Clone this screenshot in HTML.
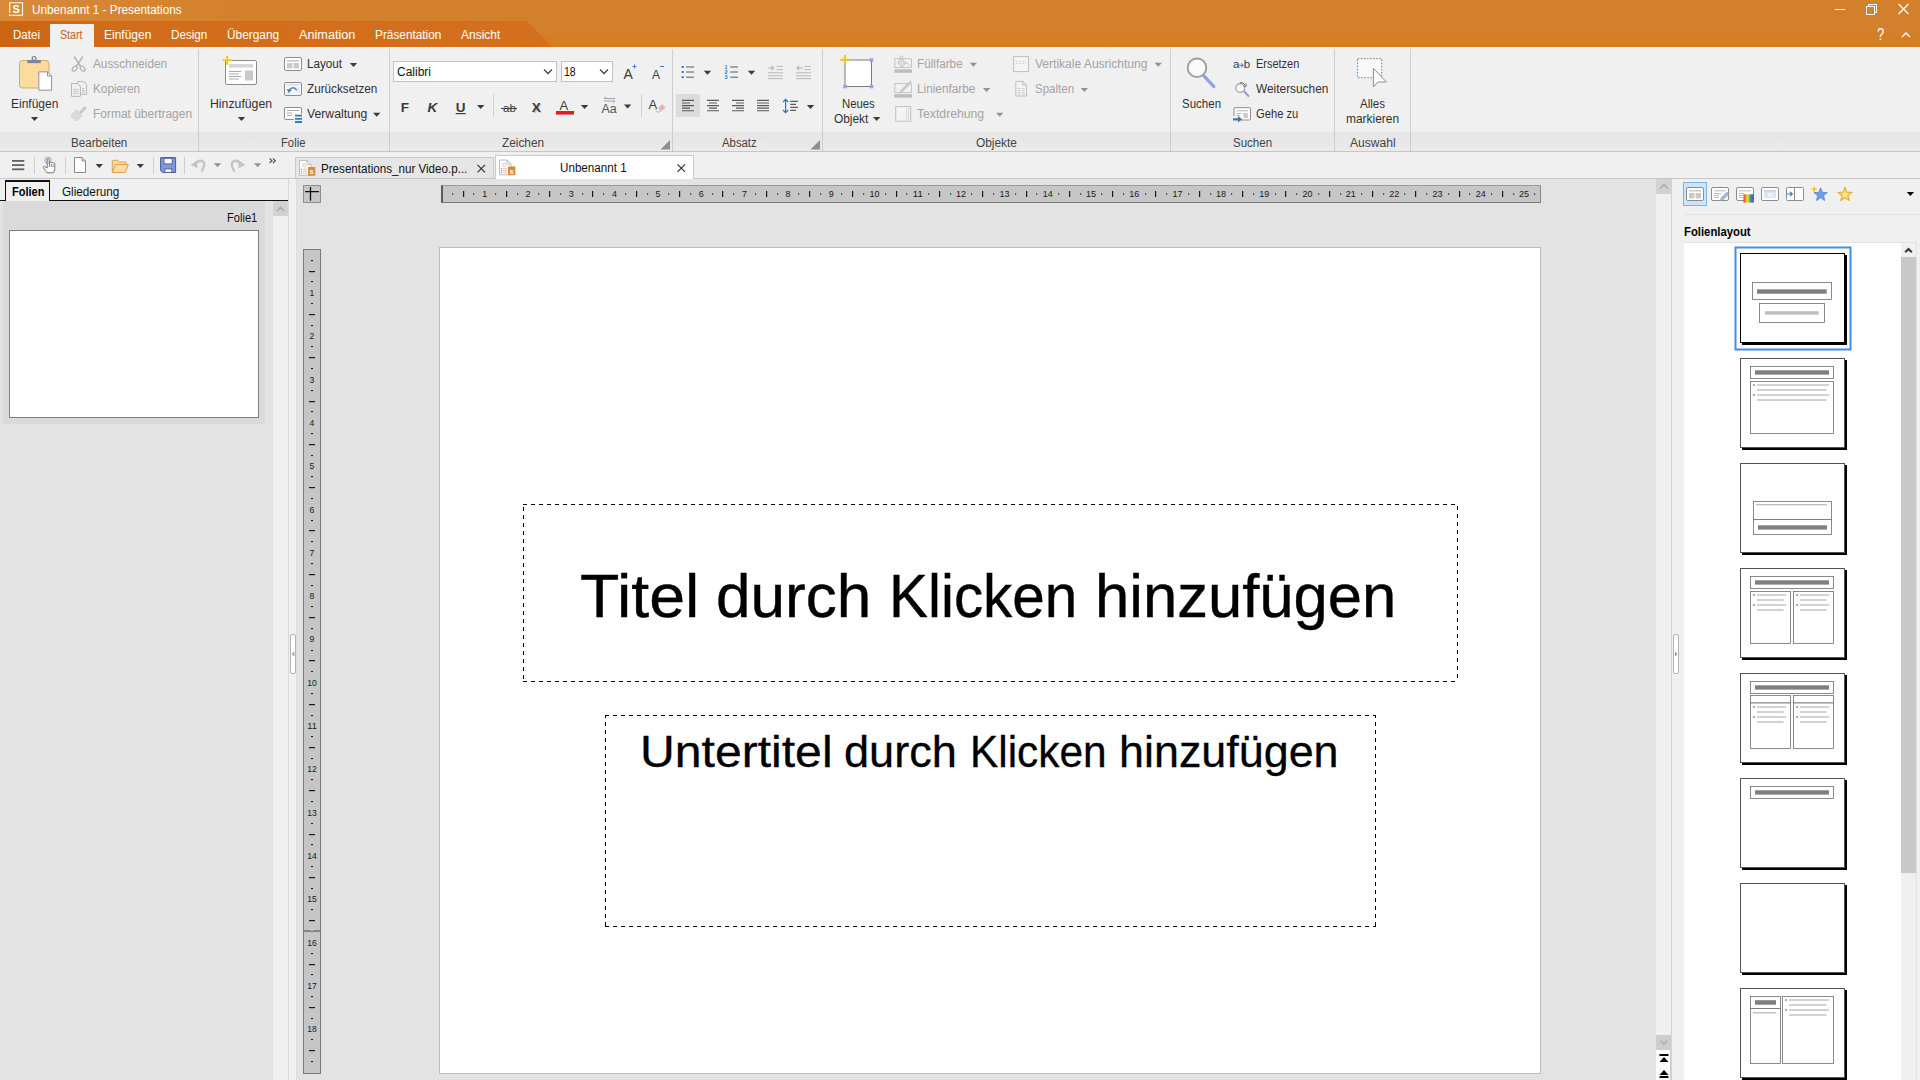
<!DOCTYPE html>
<html><head><meta charset="utf-8"><title>Unbenannt 1 - Presentations</title>
<style>
*{box-sizing:border-box;margin:0;padding:0}
html,body{width:1920px;height:1080px;overflow:hidden;background:#f0f0f0;font-family:"Liberation Sans",sans-serif;font-size:12px;color:#222}
.a{position:absolute}
.t{position:absolute;white-space:nowrap;transform-origin:0 0;font-family:"Liberation Sans",sans-serif}
svg{position:absolute;overflow:visible}
.sep{position:absolute;top:49px;width:1px;height:102px;background:#cdcdcd}
.tsep{position:absolute;top:157px;width:1px;height:17px;background:#cfcfcf}
.ar{position:absolute;width:0;height:0;border-left:4px solid transparent;border-right:4px solid transparent;border-top:4px solid #3a3a3a}
.ar.g{border-top-color:#9a9a9a}
</style></head><body>
<!-- TITLE + MENU -->
<div class="a" style="left:0;top:0;width:1920px;height:47px;background:#d2802b"></div>
<div class="a" style="left:0;top:0;width:1920px;height:21px;background:linear-gradient(90deg,#d98a38 0,#d2802b 260px)"></div>
<div class="a" style="left:0;top:33px;width:1920px;height:14px;background:linear-gradient(180deg,#d2802b 0,#d67c25 4px,#d67c25 14px)"></div>
<div class="a" style="left:0;top:21px;width:553px;height:26px;background:linear-gradient(90deg,#cb6413 0,#d16c1a 120px,#d4701d 550px);clip-path:polygon(0 0,527px 0,552px 26px,0 26px)"></div>
<div class="a" style="left:50px;top:24px;width:44px;height:23px;background:#f0f0f0"></div>
<!-- RIBBON -->
<div class="a" style="left:0;top:47px;width:1920px;height:105px;background:#f0f0f0"></div>
<div class="a" style="left:0;top:132px;width:1920px;height:19px;background:linear-gradient(180deg,#e5e5e5,#ebebeb)"></div>
<div class="a" style="left:0;top:151px;width:1920px;height:1px;background:#c6c6c6"></div>
<div class="sep" style="left:198px"></div><div class="sep" style="left:389px"></div><div class="sep" style="left:672px"></div>
<div class="sep" style="left:822px"></div><div class="sep" style="left:1170px"></div><div class="sep" style="left:1334px"></div><div class="sep" style="left:1410px"></div>
<!-- TOOLBAR ROW -->
<div class="a" style="left:0;top:152px;width:1920px;height:26px;background:#f0f0f0"></div>
<div class="a" style="left:0;top:178px;width:1920px;height:1px;background:#c6c6c6"></div>
<!-- doc tabs -->
<div class="a" style="left:295px;top:157px;width:199px;height:21px;background:#e6e6e6;border:1px solid #c9c9c9;border-bottom:none"></div>
<div class="a" style="left:495px;top:155px;width:199px;height:24px;background:#fff;border:1px solid #c9c9c9;border-bottom:none"></div>
<!-- LEFT PANEL -->
<div class="a" style="left:0;top:179px;width:289px;height:901px;background:#f0f0f0"></div>
<div class="a" style="left:0;top:201px;width:273px;height:879px;background:#e3e3e3"></div>
<div class="a" style="left:3px;top:201px;width:262px;height:223px;background:#dadada"></div>
<div class="a" style="left:9px;top:230px;width:250px;height:188px;background:#fff;border:1px solid #7d7d7d"></div>
<div class="a" style="left:273px;top:201px;width:15px;height:879px;background:#f0f0f0"></div>
<div class="a" style="left:273px;top:201px;width:15px;height:15px;background:#d2d2d2"></div>
<svg style="left:273px;top:201px" width="15" height="15"><path d="M4 10 L7.5 6.5 L11 10" fill="none" stroke="#aaa" stroke-width="1.6"/></svg>
<!-- folien tabs -->
<div class="a" style="left:0;top:200px;width:288px;height:1px;background:#111"></div>
<div class="a" style="left:5px;top:180px;width:45px;height:21px;background:#f0f0f0;border:2px solid #111;border-width:2px 1px 0 1px"></div>
<!-- left splitter -->
<div class="a" style="left:288px;top:179px;width:9px;height:901px;background:#f0f0f0;border-left:1px solid #d9d9d9;border-right:1px solid #dcdcdc"></div>
<div class="a" style="left:290px;top:634px;width:6px;height:40px;background:#fff;border:1px solid #b5b5b5;border-radius:2px"></div>
<!-- MAIN -->
<div class="a" style="left:297px;top:179px;width:1359px;height:901px;background:#e3e3e3"></div>
<div class="a" style="left:439px;top:247px;width:1102px;height:827px;background:#fff;border:1px solid #bdbdbd"></div>
<svg style="left:0;top:0" width="1920" height="1080" shape-rendering="crispEdges"><g stroke="#000" stroke-width="1" stroke-dasharray="4 4" fill="none">
<path d="M523 504.5 H1458 M523 681.5 H1458"/>
<path d="M523.5 504 V682" stroke-dashoffset="5"/><path d="M1457.5 504 V682" stroke-dashoffset="6"/>
<path d="M605 715.5 H1376 M605 926.5 H1376"/>
<path d="M605.5 715 V927" stroke-dashoffset="1"/><path d="M1375.5 715 V927" stroke-dashoffset="1"/>
</g></svg>
<!-- main scrollbar -->
<div class="a" style="left:1656px;top:179px;width:16px;height:901px;background:#f0f0f0"></div>
<div class="a" style="left:1656px;top:179px;width:16px;height:15px;background:#d2d2d2"></div>
<svg style="left:1656px;top:179px" width="16" height="15"><path d="M4.3 9.5 L8 5.8 L11.7 9.5" fill="none" stroke="#aaa" stroke-width="1.6"/></svg>
<div class="a" style="left:1656px;top:1035px;width:16px;height:15px;background:#cdcdcd"></div>
<svg style="left:1656px;top:1035px" width="16" height="15"><path d="M4.5 5.5 L8 9 L11.5 5.5" fill="none" stroke="#b0b0b0" stroke-width="1.6"/></svg>
<div class="a" style="left:1656px;top:1050px;width:15px;height:30px;background:#fbfbfb;border-right:1px solid #ccc"></div>
<svg style="left:1656px;top:1050px" width="16" height="30"><rect x="3.5" y="4" width="9" height="2" fill="#000"/><path d="M3.5 12 L8 7 L12.5 12Z" fill="#000"/><path d="M3.5 25 L8 20 L12.5 25Z" fill="#000"/><rect x="3.5" y="26" width="9" height="2" fill="#000"/></svg>
<!-- RIGHT PANEL -->
<div class="a" style="left:1671px;top:179px;width:249px;height:901px;background:#f0f0f0;border-left:1px solid #d4d4d4"></div>
<div class="a" style="left:1673px;top:634px;width:6px;height:40px;background:#fff;border:1px solid #b5b5b5;border-radius:2px"></div>
<div class="a" style="left:1684px;top:214px;width:236px;height:1px;background:#e2e2e2"></div>
<div class="a" style="left:1684px;top:242px;width:217px;height:838px;background:#fff;border-top:1px solid #e2e2e2"></div>
<div class="a" style="left:1901px;top:242px;width:16px;height:838px;background:#f0f0f0;border-top:1px solid #e2e2e2;border-right:1px solid #e2e2e2"></div>
<div class="a" style="left:1901px;top:257px;width:15px;height:616px;background:#c8c8c8"></div>
<svg style="left:1901px;top:243px" width="15" height="14"><path d="M4.2 9.3 L7.5 6 L10.8 9.3" fill="none" stroke="#3a3a3a" stroke-width="2.2"/></svg>
<svg style="left:0;top:0" width="1920" height="1080"><path d="M294.3 651.5 L291.8 654 L294.3 656.5Z" fill="#9a9a9a"/><path d="M1675 651.5 L1677.5 654 L1675 656.5Z" fill="#9a9a9a"/></svg>

<div class="a" style="left:441px;top:185px;width:1100px;height:18px;background:#c6c6c6;border:1px solid #7a7a7a;border-top-color:#9a9a9a;border-right-color:#8a8a8a;border-left:2px solid #5c5c5c"></div>
<div class="a" style="left:303px;top:249px;width:18px;height:825px;background:#c6c6c6;border:1px solid #7a7a7a"></div>
<div class="a" style="left:303px;top:185px;width:18px;height:18px;background:#c7c7c7;border:1px solid #8e8e8e"></div>
<svg style="left:303px;top:185px" width="18" height="18"><path d="M2 6.6 H16 M7.5 2 V15.7" stroke="#111" stroke-width="1.3" fill="none"/></svg>
<svg style="left:0;top:0" width="1920" height="1080"><rect x="452" y="193.4" width="1.2" height="1.3" fill="#1a1a1a"/><rect x="463" y="191" width="1.2" height="6" fill="#1a1a1a"/><rect x="473" y="193.4" width="1.2" height="1.3" fill="#1a1a1a"/><text x="484.7" y="197.2" font-size="9.5" text-anchor="middle" textLength="5.0" lengthAdjust="spacingAndGlyphs" fill="#1a1a1a" font-family="Liberation Sans">1</text><rect x="495" y="193.4" width="1.2" height="1.3" fill="#1a1a1a"/><rect x="506" y="191" width="1.2" height="6" fill="#1a1a1a"/><rect x="517" y="193.4" width="1.2" height="1.3" fill="#1a1a1a"/><text x="528.0" y="197.2" font-size="9.5" text-anchor="middle" textLength="5.0" lengthAdjust="spacingAndGlyphs" fill="#1a1a1a" font-family="Liberation Sans">2</text><rect x="538" y="193.4" width="1.2" height="1.3" fill="#1a1a1a"/><rect x="549" y="191" width="1.2" height="6" fill="#1a1a1a"/><rect x="560" y="193.4" width="1.2" height="1.3" fill="#1a1a1a"/><text x="571.3" y="197.2" font-size="9.5" text-anchor="middle" textLength="5.0" lengthAdjust="spacingAndGlyphs" fill="#1a1a1a" font-family="Liberation Sans">3</text><rect x="582" y="193.4" width="1.2" height="1.3" fill="#1a1a1a"/><rect x="592" y="191" width="1.2" height="6" fill="#1a1a1a"/><rect x="603" y="193.4" width="1.2" height="1.3" fill="#1a1a1a"/><text x="614.6" y="197.2" font-size="9.5" text-anchor="middle" textLength="5.0" lengthAdjust="spacingAndGlyphs" fill="#1a1a1a" font-family="Liberation Sans">4</text><rect x="625" y="193.4" width="1.2" height="1.3" fill="#1a1a1a"/><rect x="636" y="191" width="1.2" height="6" fill="#1a1a1a"/><rect x="647" y="193.4" width="1.2" height="1.3" fill="#1a1a1a"/><text x="657.9" y="197.2" font-size="9.5" text-anchor="middle" textLength="5.0" lengthAdjust="spacingAndGlyphs" fill="#1a1a1a" font-family="Liberation Sans">5</text><rect x="668" y="193.4" width="1.2" height="1.3" fill="#1a1a1a"/><rect x="679" y="191" width="1.2" height="6" fill="#1a1a1a"/><rect x="690" y="193.4" width="1.2" height="1.3" fill="#1a1a1a"/><text x="701.2" y="197.2" font-size="9.5" text-anchor="middle" textLength="5.0" lengthAdjust="spacingAndGlyphs" fill="#1a1a1a" font-family="Liberation Sans">6</text><rect x="712" y="193.4" width="1.2" height="1.3" fill="#1a1a1a"/><rect x="722" y="191" width="1.2" height="6" fill="#1a1a1a"/><rect x="733" y="193.4" width="1.2" height="1.3" fill="#1a1a1a"/><text x="744.5" y="197.2" font-size="9.5" text-anchor="middle" textLength="5.0" lengthAdjust="spacingAndGlyphs" fill="#1a1a1a" font-family="Liberation Sans">7</text><rect x="755" y="193.4" width="1.2" height="1.3" fill="#1a1a1a"/><rect x="766" y="191" width="1.2" height="6" fill="#1a1a1a"/><rect x="777" y="193.4" width="1.2" height="1.3" fill="#1a1a1a"/><text x="787.9" y="197.2" font-size="9.5" text-anchor="middle" textLength="5.0" lengthAdjust="spacingAndGlyphs" fill="#1a1a1a" font-family="Liberation Sans">8</text><rect x="798" y="193.4" width="1.2" height="1.3" fill="#1a1a1a"/><rect x="809" y="191" width="1.2" height="6" fill="#1a1a1a"/><rect x="820" y="193.4" width="1.2" height="1.3" fill="#1a1a1a"/><text x="831.2" y="197.2" font-size="9.5" text-anchor="middle" textLength="5.0" lengthAdjust="spacingAndGlyphs" fill="#1a1a1a" font-family="Liberation Sans">9</text><rect x="841" y="193.4" width="1.2" height="1.3" fill="#1a1a1a"/><rect x="852" y="191" width="1.2" height="6" fill="#1a1a1a"/><rect x="863" y="193.4" width="1.2" height="1.3" fill="#1a1a1a"/><text x="874.5" y="197.2" font-size="9.5" text-anchor="middle" textLength="10.0" lengthAdjust="spacingAndGlyphs" fill="#1a1a1a" font-family="Liberation Sans">10</text><rect x="885" y="193.4" width="1.2" height="1.3" fill="#1a1a1a"/><rect x="896" y="191" width="1.2" height="6" fill="#1a1a1a"/><rect x="906" y="193.4" width="1.2" height="1.3" fill="#1a1a1a"/><text x="917.8" y="197.2" font-size="9.5" text-anchor="middle" textLength="10.0" lengthAdjust="spacingAndGlyphs" fill="#1a1a1a" font-family="Liberation Sans">11</text><rect x="928" y="193.4" width="1.2" height="1.3" fill="#1a1a1a"/><rect x="939" y="191" width="1.2" height="6" fill="#1a1a1a"/><rect x="950" y="193.4" width="1.2" height="1.3" fill="#1a1a1a"/><text x="961.1" y="197.2" font-size="9.5" text-anchor="middle" textLength="10.0" lengthAdjust="spacingAndGlyphs" fill="#1a1a1a" font-family="Liberation Sans">12</text><rect x="971" y="193.4" width="1.2" height="1.3" fill="#1a1a1a"/><rect x="982" y="191" width="1.2" height="6" fill="#1a1a1a"/><rect x="993" y="193.4" width="1.2" height="1.3" fill="#1a1a1a"/><text x="1004.4" y="197.2" font-size="9.5" text-anchor="middle" textLength="10.0" lengthAdjust="spacingAndGlyphs" fill="#1a1a1a" font-family="Liberation Sans">13</text><rect x="1015" y="193.4" width="1.2" height="1.3" fill="#1a1a1a"/><rect x="1026" y="191" width="1.2" height="6" fill="#1a1a1a"/><rect x="1036" y="193.4" width="1.2" height="1.3" fill="#1a1a1a"/><text x="1047.7" y="197.2" font-size="9.5" text-anchor="middle" textLength="10.0" lengthAdjust="spacingAndGlyphs" fill="#1a1a1a" font-family="Liberation Sans">14</text><rect x="1058" y="193.4" width="1.2" height="1.3" fill="#1a1a1a"/><rect x="1069" y="191" width="1.2" height="6" fill="#1a1a1a"/><rect x="1080" y="193.4" width="1.2" height="1.3" fill="#1a1a1a"/><text x="1091.0" y="197.2" font-size="9.5" text-anchor="middle" textLength="10.0" lengthAdjust="spacingAndGlyphs" fill="#1a1a1a" font-family="Liberation Sans">15</text><rect x="1101" y="193.4" width="1.2" height="1.3" fill="#1a1a1a"/><rect x="1112" y="191" width="1.2" height="6" fill="#1a1a1a"/><rect x="1123" y="193.4" width="1.2" height="1.3" fill="#1a1a1a"/><text x="1134.3" y="197.2" font-size="9.5" text-anchor="middle" textLength="10.0" lengthAdjust="spacingAndGlyphs" fill="#1a1a1a" font-family="Liberation Sans">16</text><rect x="1145" y="193.4" width="1.2" height="1.3" fill="#1a1a1a"/><rect x="1155" y="191" width="1.2" height="6" fill="#1a1a1a"/><rect x="1166" y="193.4" width="1.2" height="1.3" fill="#1a1a1a"/><text x="1177.6" y="197.2" font-size="9.5" text-anchor="middle" textLength="10.0" lengthAdjust="spacingAndGlyphs" fill="#1a1a1a" font-family="Liberation Sans">17</text><rect x="1188" y="193.4" width="1.2" height="1.3" fill="#1a1a1a"/><rect x="1199" y="191" width="1.2" height="6" fill="#1a1a1a"/><rect x="1210" y="193.4" width="1.2" height="1.3" fill="#1a1a1a"/><text x="1220.9" y="197.2" font-size="9.5" text-anchor="middle" textLength="10.0" lengthAdjust="spacingAndGlyphs" fill="#1a1a1a" font-family="Liberation Sans">18</text><rect x="1231" y="193.4" width="1.2" height="1.3" fill="#1a1a1a"/><rect x="1242" y="191" width="1.2" height="6" fill="#1a1a1a"/><rect x="1253" y="193.4" width="1.2" height="1.3" fill="#1a1a1a"/><text x="1264.2" y="197.2" font-size="9.5" text-anchor="middle" textLength="10.0" lengthAdjust="spacingAndGlyphs" fill="#1a1a1a" font-family="Liberation Sans">19</text><rect x="1275" y="193.4" width="1.2" height="1.3" fill="#1a1a1a"/><rect x="1285" y="191" width="1.2" height="6" fill="#1a1a1a"/><rect x="1296" y="193.4" width="1.2" height="1.3" fill="#1a1a1a"/><text x="1307.5" y="197.2" font-size="9.5" text-anchor="middle" textLength="10.0" lengthAdjust="spacingAndGlyphs" fill="#1a1a1a" font-family="Liberation Sans">20</text><rect x="1318" y="193.4" width="1.2" height="1.3" fill="#1a1a1a"/><rect x="1329" y="191" width="1.2" height="6" fill="#1a1a1a"/><rect x="1340" y="193.4" width="1.2" height="1.3" fill="#1a1a1a"/><text x="1350.8" y="197.2" font-size="9.5" text-anchor="middle" textLength="10.0" lengthAdjust="spacingAndGlyphs" fill="#1a1a1a" font-family="Liberation Sans">21</text><rect x="1361" y="193.4" width="1.2" height="1.3" fill="#1a1a1a"/><rect x="1372" y="191" width="1.2" height="6" fill="#1a1a1a"/><rect x="1383" y="193.4" width="1.2" height="1.3" fill="#1a1a1a"/><text x="1394.2" y="197.2" font-size="9.5" text-anchor="middle" textLength="10.0" lengthAdjust="spacingAndGlyphs" fill="#1a1a1a" font-family="Liberation Sans">22</text><rect x="1404" y="193.4" width="1.2" height="1.3" fill="#1a1a1a"/><rect x="1415" y="191" width="1.2" height="6" fill="#1a1a1a"/><rect x="1426" y="193.4" width="1.2" height="1.3" fill="#1a1a1a"/><text x="1437.5" y="197.2" font-size="9.5" text-anchor="middle" textLength="10.0" lengthAdjust="spacingAndGlyphs" fill="#1a1a1a" font-family="Liberation Sans">23</text><rect x="1448" y="193.4" width="1.2" height="1.3" fill="#1a1a1a"/><rect x="1459" y="191" width="1.2" height="6" fill="#1a1a1a"/><rect x="1469" y="193.4" width="1.2" height="1.3" fill="#1a1a1a"/><text x="1480.8" y="197.2" font-size="9.5" text-anchor="middle" textLength="10.0" lengthAdjust="spacingAndGlyphs" fill="#1a1a1a" font-family="Liberation Sans">24</text><rect x="1491" y="193.4" width="1.2" height="1.3" fill="#1a1a1a"/><rect x="1502" y="191" width="1.2" height="6" fill="#1a1a1a"/><rect x="1513" y="193.4" width="1.2" height="1.3" fill="#1a1a1a"/><text x="1524.1" y="197.2" font-size="9.5" text-anchor="middle" textLength="10.0" lengthAdjust="spacingAndGlyphs" fill="#1a1a1a" font-family="Liberation Sans">25</text><rect x="1534" y="193.4" width="1.2" height="1.3" fill="#1a1a1a"/><rect x="311" y="260" width="2" height="1.1" fill="#1a1a1a"/><rect x="309" y="271" width="6" height="1.2" fill="#1a1a1a"/><rect x="311" y="281" width="2" height="1.1" fill="#1a1a1a"/><text x="312" y="296.0" font-size="9.6" text-anchor="middle" textLength="4.8" lengthAdjust="spacingAndGlyphs" fill="#1a1a1a" font-family="Liberation Sans">1</text><rect x="311" y="303" width="2" height="1.1" fill="#1a1a1a"/><rect x="309" y="314" width="6" height="1.2" fill="#1a1a1a"/><rect x="311" y="325" width="2" height="1.1" fill="#1a1a1a"/><text x="312" y="339.3" font-size="9.6" text-anchor="middle" textLength="4.8" lengthAdjust="spacingAndGlyphs" fill="#1a1a1a" font-family="Liberation Sans">2</text><rect x="311" y="346" width="2" height="1.1" fill="#1a1a1a"/><rect x="309" y="357" width="6" height="1.2" fill="#1a1a1a"/><rect x="311" y="368" width="2" height="1.1" fill="#1a1a1a"/><text x="312" y="382.6" font-size="9.6" text-anchor="middle" textLength="4.8" lengthAdjust="spacingAndGlyphs" fill="#1a1a1a" font-family="Liberation Sans">3</text><rect x="311" y="390" width="2" height="1.1" fill="#1a1a1a"/><rect x="309" y="401" width="6" height="1.2" fill="#1a1a1a"/><rect x="311" y="411" width="2" height="1.1" fill="#1a1a1a"/><text x="312" y="425.9" font-size="9.6" text-anchor="middle" textLength="4.8" lengthAdjust="spacingAndGlyphs" fill="#1a1a1a" font-family="Liberation Sans">4</text><rect x="311" y="433" width="2" height="1.1" fill="#1a1a1a"/><rect x="309" y="444" width="6" height="1.2" fill="#1a1a1a"/><rect x="311" y="455" width="2" height="1.1" fill="#1a1a1a"/><text x="312" y="469.2" font-size="9.6" text-anchor="middle" textLength="4.8" lengthAdjust="spacingAndGlyphs" fill="#1a1a1a" font-family="Liberation Sans">5</text><rect x="311" y="476" width="2" height="1.1" fill="#1a1a1a"/><rect x="309" y="487" width="6" height="1.2" fill="#1a1a1a"/><rect x="311" y="498" width="2" height="1.1" fill="#1a1a1a"/><text x="312" y="512.5" font-size="9.6" text-anchor="middle" textLength="4.8" lengthAdjust="spacingAndGlyphs" fill="#1a1a1a" font-family="Liberation Sans">6</text><rect x="311" y="520" width="2" height="1.1" fill="#1a1a1a"/><rect x="309" y="530" width="6" height="1.2" fill="#1a1a1a"/><rect x="311" y="541" width="2" height="1.1" fill="#1a1a1a"/><text x="312" y="555.8" font-size="9.6" text-anchor="middle" textLength="4.8" lengthAdjust="spacingAndGlyphs" fill="#1a1a1a" font-family="Liberation Sans">7</text><rect x="311" y="563" width="2" height="1.1" fill="#1a1a1a"/><rect x="309" y="574" width="6" height="1.2" fill="#1a1a1a"/><rect x="311" y="585" width="2" height="1.1" fill="#1a1a1a"/><text x="312" y="599.1" font-size="9.6" text-anchor="middle" textLength="4.8" lengthAdjust="spacingAndGlyphs" fill="#1a1a1a" font-family="Liberation Sans">8</text><rect x="311" y="606" width="2" height="1.1" fill="#1a1a1a"/><rect x="309" y="617" width="6" height="1.2" fill="#1a1a1a"/><rect x="311" y="628" width="2" height="1.1" fill="#1a1a1a"/><text x="312" y="642.4" font-size="9.6" text-anchor="middle" textLength="4.8" lengthAdjust="spacingAndGlyphs" fill="#1a1a1a" font-family="Liberation Sans">9</text><rect x="311" y="650" width="2" height="1.1" fill="#1a1a1a"/><rect x="309" y="660" width="6" height="1.2" fill="#1a1a1a"/><rect x="311" y="671" width="2" height="1.1" fill="#1a1a1a"/><text x="312" y="685.7" font-size="9.6" text-anchor="middle" textLength="9.6" lengthAdjust="spacingAndGlyphs" fill="#1a1a1a" font-family="Liberation Sans">10</text><rect x="311" y="693" width="2" height="1.1" fill="#1a1a1a"/><rect x="309" y="704" width="6" height="1.2" fill="#1a1a1a"/><rect x="311" y="715" width="2" height="1.1" fill="#1a1a1a"/><text x="312" y="729.0" font-size="9.6" text-anchor="middle" textLength="9.6" lengthAdjust="spacingAndGlyphs" fill="#1a1a1a" font-family="Liberation Sans">11</text><rect x="311" y="736" width="2" height="1.1" fill="#1a1a1a"/><rect x="309" y="747" width="6" height="1.2" fill="#1a1a1a"/><rect x="311" y="758" width="2" height="1.1" fill="#1a1a1a"/><text x="312" y="772.3" font-size="9.6" text-anchor="middle" textLength="9.6" lengthAdjust="spacingAndGlyphs" fill="#1a1a1a" font-family="Liberation Sans">12</text><rect x="311" y="779" width="2" height="1.1" fill="#1a1a1a"/><rect x="309" y="790" width="6" height="1.2" fill="#1a1a1a"/><rect x="311" y="801" width="2" height="1.1" fill="#1a1a1a"/><text x="312" y="815.6" font-size="9.6" text-anchor="middle" textLength="9.6" lengthAdjust="spacingAndGlyphs" fill="#1a1a1a" font-family="Liberation Sans">13</text><rect x="311" y="823" width="2" height="1.1" fill="#1a1a1a"/><rect x="309" y="834" width="6" height="1.2" fill="#1a1a1a"/><rect x="311" y="844" width="2" height="1.1" fill="#1a1a1a"/><text x="312" y="858.9" font-size="9.6" text-anchor="middle" textLength="9.6" lengthAdjust="spacingAndGlyphs" fill="#1a1a1a" font-family="Liberation Sans">14</text><rect x="311" y="866" width="2" height="1.1" fill="#1a1a1a"/><rect x="309" y="877" width="6" height="1.2" fill="#1a1a1a"/><rect x="311" y="888" width="2" height="1.1" fill="#1a1a1a"/><text x="312" y="902.3" font-size="9.6" text-anchor="middle" textLength="9.6" lengthAdjust="spacingAndGlyphs" fill="#1a1a1a" font-family="Liberation Sans">15</text><rect x="311" y="909" width="2" height="1.1" fill="#1a1a1a"/><rect x="309" y="920" width="6" height="1.2" fill="#1a1a1a"/><rect x="311" y="931" width="2" height="1.1" fill="#1a1a1a"/><text x="312" y="945.6" font-size="9.6" text-anchor="middle" textLength="9.6" lengthAdjust="spacingAndGlyphs" fill="#1a1a1a" font-family="Liberation Sans">16</text><rect x="311" y="953" width="2" height="1.1" fill="#1a1a1a"/><rect x="309" y="964" width="6" height="1.2" fill="#1a1a1a"/><rect x="311" y="974" width="2" height="1.1" fill="#1a1a1a"/><text x="312" y="988.9" font-size="9.6" text-anchor="middle" textLength="9.6" lengthAdjust="spacingAndGlyphs" fill="#1a1a1a" font-family="Liberation Sans">17</text><rect x="311" y="996" width="2" height="1.1" fill="#1a1a1a"/><rect x="309" y="1007" width="6" height="1.2" fill="#1a1a1a"/><rect x="311" y="1018" width="2" height="1.1" fill="#1a1a1a"/><text x="312" y="1032.2" font-size="9.6" text-anchor="middle" textLength="9.6" lengthAdjust="spacingAndGlyphs" fill="#1a1a1a" font-family="Liberation Sans">18</text><rect x="311" y="1039" width="2" height="1.1" fill="#1a1a1a"/><rect x="309" y="1050" width="6" height="1.2" fill="#1a1a1a"/><rect x="311" y="1061" width="2" height="1.1" fill="#1a1a1a"/><rect x="304" y="930.5" width="16" height="1" fill="#444"/><rect x="311" y="930.5" width="2" height="1" fill="#eee"/></svg>
<svg style="left:0;top:0" width="1920" height="1080"><rect x="1735.5" y="247.5" width="115" height="102" fill="#fff" stroke="#3c8fe6" stroke-width="2"/><rect x="1742" y="255" width="105" height="90" fill="#000"/><rect x="1740.5" y="253.5" width="104" height="89" fill="#fff" stroke="#000" stroke-width="1"/><rect x="1742" y="360" width="105" height="90" fill="#000"/><rect x="1740.5" y="358.5" width="104" height="89" fill="#fff" stroke="#555" stroke-width="1"/><rect x="1742" y="465" width="105" height="90" fill="#000"/><rect x="1740.5" y="463.5" width="104" height="89" fill="#fff" stroke="#555" stroke-width="1"/><rect x="1742" y="570" width="105" height="90" fill="#000"/><rect x="1740.5" y="568.5" width="104" height="89" fill="#fff" stroke="#555" stroke-width="1"/><rect x="1742" y="675" width="105" height="90" fill="#000"/><rect x="1740.5" y="673.5" width="104" height="89" fill="#fff" stroke="#555" stroke-width="1"/><rect x="1742" y="780" width="105" height="90" fill="#000"/><rect x="1740.5" y="778.5" width="104" height="89" fill="#fff" stroke="#555" stroke-width="1"/><rect x="1742" y="885" width="105" height="90" fill="#000"/><rect x="1740.5" y="883.5" width="104" height="89" fill="#fff" stroke="#555" stroke-width="1"/><rect x="1742" y="990" width="105" height="90" fill="#000"/><rect x="1740.5" y="988.5" width="104" height="89" fill="#fff" stroke="#555" stroke-width="1"/><rect x="1752.5" y="282.5" width="79.0" height="17.0" fill="#fff" stroke="#6e6e6e" stroke-width="0.8"/><rect x="1757" y="289.3" width="69.7" height="4.4" fill="#7f7f7f"/><rect x="1759.5" y="303.5" width="65.0" height="19.0" fill="#fff" stroke="#6e6e6e" stroke-width="0.8"/><rect x="1765" y="311.2" width="53.6" height="3.4" fill="#bdbdbd"/><rect x="1750.5" y="366.5" width="83.0" height="12.0" fill="#fff" stroke="#6e6e6e" stroke-width="0.8"/><rect x="1755" y="370.3" width="74.0" height="4.3" fill="#7f7f7f"/><rect x="1750.5" y="381.5" width="83.0" height="52.0" fill="#fff" stroke="#6e6e6e" stroke-width="0.8"/><rect x="1757.2" y="384.4" width="71.8" height="1.2" fill="#b5b5b5"/><rect x="1753.3" y="384.3" width="1.4" height="1.4" fill="#555"/><rect x="1757.2" y="389.4" width="69.3" height="1.2" fill="#b5b5b5"/><rect x="1757.2" y="394.4" width="71.8" height="1.2" fill="#b5b5b5"/><rect x="1753.3" y="394.3" width="1.4" height="1.4" fill="#555"/><rect x="1757.2" y="399.4" width="69.3" height="1.2" fill="#b5b5b5"/><rect x="1753.5" y="501.5" width="78.0" height="18.0" fill="#fff" stroke="#6e6e6e" stroke-width="0.8"/><rect x="1756" y="504.1" width="71.0" height="1.2" fill="#b5b5b5"/><rect x="1753.5" y="519.5" width="78.0" height="15.0" fill="#fff" stroke="#6e6e6e" stroke-width="0.8"/><rect x="1758" y="525.3" width="69.0" height="4.3" fill="#7f7f7f"/><rect x="1750.5" y="576.5" width="83.0" height="12.0" fill="#fff" stroke="#6e6e6e" stroke-width="0.8"/><rect x="1755" y="580.3" width="74.0" height="4.3" fill="#7f7f7f"/><rect x="1750.5" y="591.5" width="40.0" height="52.0" fill="#fff" stroke="#6e6e6e" stroke-width="0.8"/><rect x="1757" y="594.4" width="29.0" height="1.2" fill="#b5b5b5"/><rect x="1753.3" y="594.3" width="1.4" height="1.4" fill="#555"/><rect x="1757" y="599.4" width="26.5" height="1.2" fill="#b5b5b5"/><rect x="1757" y="604.4" width="29.0" height="1.2" fill="#b5b5b5"/><rect x="1753.3" y="604.3" width="1.4" height="1.4" fill="#555"/><rect x="1757" y="609.4" width="26.5" height="1.2" fill="#b5b5b5"/><rect x="1793.5" y="591.5" width="40.0" height="52.0" fill="#fff" stroke="#6e6e6e" stroke-width="0.8"/><rect x="1800" y="594.4" width="29.0" height="1.2" fill="#b5b5b5"/><rect x="1796.3" y="594.3" width="1.4" height="1.4" fill="#555"/><rect x="1800" y="599.4" width="26.5" height="1.2" fill="#b5b5b5"/><rect x="1800" y="604.4" width="29.0" height="1.2" fill="#b5b5b5"/><rect x="1796.3" y="604.3" width="1.4" height="1.4" fill="#555"/><rect x="1800" y="609.4" width="26.5" height="1.2" fill="#b5b5b5"/><rect x="1750.5" y="681.5" width="83.0" height="12.0" fill="#fff" stroke="#6e6e6e" stroke-width="0.8"/><rect x="1755" y="685.3" width="74.0" height="4.3" fill="#7f7f7f"/><rect x="1750.5" y="695.5" width="40.0" height="7.5" fill="#fff" stroke="#6e6e6e" stroke-width="0.8"/><rect x="1793.5" y="695.5" width="40.0" height="7.5" fill="#fff" stroke="#6e6e6e" stroke-width="0.8"/><rect x="1750.5" y="703" width="40.0" height="45.5" fill="#fff" stroke="#6e6e6e" stroke-width="0.8"/><rect x="1757" y="706.4" width="29.0" height="1.2" fill="#b5b5b5"/><rect x="1753.3" y="706.3" width="1.4" height="1.4" fill="#555"/><rect x="1757" y="711.4" width="26.5" height="1.2" fill="#b5b5b5"/><rect x="1757" y="716.4" width="29.0" height="1.2" fill="#b5b5b5"/><rect x="1753.3" y="716.3" width="1.4" height="1.4" fill="#555"/><rect x="1757" y="721.4" width="26.5" height="1.2" fill="#b5b5b5"/><rect x="1793.5" y="703" width="40.0" height="45.5" fill="#fff" stroke="#6e6e6e" stroke-width="0.8"/><rect x="1800" y="706.4" width="29.0" height="1.2" fill="#b5b5b5"/><rect x="1796.3" y="706.3" width="1.4" height="1.4" fill="#555"/><rect x="1800" y="711.4" width="26.5" height="1.2" fill="#b5b5b5"/><rect x="1800" y="716.4" width="29.0" height="1.2" fill="#b5b5b5"/><rect x="1796.3" y="716.3" width="1.4" height="1.4" fill="#555"/><rect x="1800" y="721.4" width="26.5" height="1.2" fill="#b5b5b5"/><rect x="1750.5" y="786.5" width="83.0" height="12.0" fill="#fff" stroke="#6e6e6e" stroke-width="0.8"/><rect x="1755" y="790.3" width="74.0" height="4.3" fill="#7f7f7f"/><rect x="1750.5" y="996.5" width="30.0" height="12.0" fill="#fff" stroke="#6e6e6e" stroke-width="0.8"/><rect x="1755" y="1000.2" width="21.0" height="4.5" fill="#7f7f7f"/><rect x="1750.5" y="1008.5" width="30.0" height="55.0" fill="#fff" stroke="#6e6e6e" stroke-width="0.8"/><rect x="1753" y="1012.2" width="23.0" height="1.2" fill="#b5b5b5"/><rect x="1782.5" y="996.5" width="51.0" height="67.0" fill="#fff" stroke="#6e6e6e" stroke-width="0.8"/><rect x="1789" y="999.4" width="40.0" height="1.2" fill="#b5b5b5"/><rect x="1785.3" y="999.3" width="1.4" height="1.4" fill="#555"/><rect x="1789" y="1004.4" width="37.5" height="1.2" fill="#b5b5b5"/><rect x="1789" y="1009.4" width="40.0" height="1.2" fill="#b5b5b5"/><rect x="1785.3" y="1009.3" width="1.4" height="1.4" fill="#555"/><rect x="1789" y="1014.4" width="37.5" height="1.2" fill="#b5b5b5"/></svg>
<!-- title icons -->
<svg style="left:0;top:0" width="1920" height="47">
<path d="M11.5 15.2 H22.5 V2.8 H9.7 V13" fill="none" stroke="#fff" stroke-width="1.1"/>
<rect x="9" y="14.4" width="1.6" height="1.6" fill="#fff"/>
<text x="16.1" y="13" font-size="11" font-weight="700" text-anchor="middle" fill="#fff" font-family="Liberation Sans">S</text>
<rect x="1835" y="9" width="10" height="1" fill="#fff"/>
<path d="M1866.5 6.5 H1874.5 V14.5 H1866.5Z M1868.5 6.5 V4.5 H1876.5 V12.5 H1874.5" fill="none" stroke="#fff" stroke-width="1"/>
<path d="M1898.5 4 L1908.5 14 M1908.5 4 L1898.5 14" stroke="#fff" stroke-width="1.2" fill="none"/>
<text x="1880.5" y="40" font-size="16" textLength="7.2" lengthAdjust="spacingAndGlyphs" text-anchor="middle" fill="#fff" font-family="Liberation Sans">?</text>
<path d="M1902 37 L1906 33 L1910 37" fill="none" stroke="#fff" stroke-width="1.3"/>
</svg>

<svg style="left:0;top:0" width="1920" height="220"><path d="M30.8 117 H38.2 L34.5 121Z" fill="#3b3b3b"/><path d="M237.8 117 H245.2 L241.5 121Z" fill="#3b3b3b"/><path d="M349.8 63 H357.2 L353.5 67Z" fill="#3b3b3b"/><path d="M373.0 112.8 H380.4 L376.7 116.8Z" fill="#3b3b3b"/><path d="M477.0 105 H484.4 L480.7 109Z" fill="#3b3b3b"/><path d="M580.9 105 H588.3 L584.6 109Z" fill="#3b3b3b"/><path d="M623.9 104.5 H631.3 L627.6 108.5Z" fill="#3b3b3b"/><path d="M703.8 70.8 H711.2 L707.5 74.8Z" fill="#3b3b3b"/><path d="M747.8 70.8 H755.2 L751.5 74.8Z" fill="#3b3b3b"/><path d="M806.8 105 H814.2 L810.5 109Z" fill="#3b3b3b"/><path d="M873.0 117 H880.4 L876.7 121Z" fill="#3b3b3b"/><path d="M969.7 62.7 H977.1 L973.4 66.7Z" fill="#929292"/><path d="M982.9 88 H990.3 L986.6 92Z" fill="#929292"/><path d="M996.0 112.8 H1003.4 L999.7 116.8Z" fill="#929292"/><path d="M1154.6 62.7 H1162.0 L1158.3 66.7Z" fill="#929292"/><path d="M1080.7 88 H1088.1 L1084.4 92Z" fill="#929292"/><path d="M95.6 164 H103.0 L99.3 168Z" fill="#3b3b3b"/><path d="M136.6 164 H144.0 L140.3 168Z" fill="#3b3b3b"/><path d="M213.8 163.2 H221.2 L217.5 167.2Z" fill="#929292"/><path d="M253.9 163.2 H261.3 L257.6 167.2Z" fill="#929292"/><path d="M1906.7 192 H1914.1 L1910.4 196Z" fill="#0a0a0a"/></svg>
<!-- ribbon group 1+2 icons -->
<svg style="left:0;top:0" width="400" height="152">
<!-- clipboard -->
<rect x="19.5" y="60.5" width="29.5" height="27.5" rx="3" fill="#fbdc9d" stroke="#d8ab62" stroke-width="1"/>
<circle cx="34.1" cy="58.6" r="1.9" fill="none" stroke="#80869a" stroke-width="1.3"/>
<rect x="27.3" y="60" width="13.6" height="3.2" fill="#80869a"/>
<path d="M38.8 71.9 H47.5 L51.6 76 V90.2 H38.8Z" fill="#fff" stroke="#8d92a3" stroke-width="1"/>
<path d="M47.5 71.9 V76 H51.6" fill="none" stroke="#8d92a3" stroke-width="1"/>
<!-- scissors (disabled) -->
<g fill="none" stroke="#b2b2b2" stroke-width="1.2">
<path d="M74.2 56.6 L80.6 66.4 M82.8 56.6 L76.4 66.4" stroke-width="1.6"/>
<ellipse cx="74.6" cy="68.6" rx="2.9" ry="1.9" transform="rotate(-48 74.6 68.6)"/>
<ellipse cx="82.6" cy="68.6" rx="2.9" ry="1.9" transform="rotate(48 82.6 68.6)"/>
</g>
<!-- copy (disabled) -->
<g fill="#f0f0f0" stroke="#b8b8b8" stroke-width="1">
<path d="M77.5 81.7 H83.8 L86.6 84.5 V94.3 H77.5Z"/>
<path d="M71.5 83.6 H77.6 L80.4 86.4 V96.4 H71.5Z"/>
</g>
<g stroke="#c2c2c2" stroke-width="0.9"><path d="M73.2 89.5 H78.6 M73.2 91.6 H78.6 M73.2 93.6 H78.6 M82 88.5 H84.8 M82 90.5 H84.8 M82 92.3 H84.8"/></g>
<!-- format brush (disabled) -->
<g stroke="#c0c0c0" stroke-width="0.9">
<path d="M71 115.6 L76.6 110 L82 115.4 L76.4 121 Z" fill="#e4e4e4"/>
<path d="M73.2 113.6 L78.6 119 M75 111.8 L80.4 117.2 M73 117.6 L78.6 112 M74.8 119.4 L80.4 113.8" stroke-width="0.6"/>
<path d="M79.6 112 L84.6 106.8 L86 108.2 L81 113.4Z" fill="#c6c6c6"/>
</g>
<!-- Hinzufuegen icon -->
<rect x="225.5" y="60.5" width="31" height="24" rx="1.5" fill="#fff" stroke="#8c8c8c" stroke-width="1"/>
<rect x="229" y="64" width="24" height="3.6" fill="#d6d6d6"/>
<g stroke="#a9a9a9" stroke-width="1"><path d="M229 71.5 H241 M229 74 H239 M229 76.5 H241 M229 79 H239"/></g>
<rect x="245" y="70.5" width="8" height="10" fill="#c9c9c9"/>
<path d="M222.7 60.3 H231.7 M227.2 55.8 V64.8" stroke="#f6c51b" stroke-width="2"/>
<!-- Layout icon -->
<rect x="284.5" y="57.5" width="17" height="13" rx="1.5" fill="#fff" stroke="#8c8c8c" stroke-width="1"/>
<rect x="287" y="60" width="12" height="1.6" fill="#c9c9c9"/>
<rect x="287" y="63" width="5.4" height="5.4" fill="#c9c9c9"/><rect x="293.6" y="63" width="5.4" height="5.4" fill="#c9c9c9"/>
<!-- Zuruecksetzen -->
<rect x="284.5" y="82.5" width="17" height="13" rx="1.5" fill="#f3f6fa" stroke="#8c8c8c" stroke-width="1"/>
<path d="M287 84.8 H299 M287 93.3 H290" stroke="#c7d3e3" stroke-width="1"/>
<rect x="296.5" y="87.5" width="3" height="5" fill="#dfe6f0"/>
<path d="M289.3 91 C289.8 87.6 294.6 86.2 296.6 90.2" fill="none" stroke="#4a82b8" stroke-width="1.4"/>
<path d="M286.8 88.9 L288.6 92.9 L291.9 90.1Z" fill="#4a82b8"/>
<!-- Verwaltung -->
<rect x="284.5" y="107.5" width="17" height="12" rx="1.5" fill="#fff" stroke="#8c8c8c" stroke-width="1"/>
<g stroke="#a9a9a9" stroke-width="1"><path d="M287 110.5 H299 M287 113 H292 M287 115.5 H292"/></g>
<rect x="293.8" y="113.8" width="9" height="9.5" fill="#f0f0f0"/>
<g stroke="#2f7fb8" stroke-width="1.8"><path d="M295 115.6 H302 M295 118.8 H302 M295 122 H302"/></g>
</svg>

<!-- Zeichen + Absatz -->
<div class="a" style="left:393px;top:61px;width:164px;height:21px;background:#fff;border:1px solid #b9c4d4"></div>
<div class="a" style="left:561px;top:61px;width:52px;height:21px;background:#fff;border:1px solid #b9c4d4"></div>
<div class="a" style="left:676px;top:94px;width:24px;height:23px;background:#dcdcdc"></div>
<div class="a" style="left:493px;top:94px;width:1px;height:23px;background:#d0d0d0"></div>
<div class="a" style="left:641px;top:94px;width:1px;height:23px;background:#d0d0d0"></div>
<svg style="left:0;top:0" width="900" height="152">
<path d="M544 69.5 L548 73.5 L552 69.5" fill="none" stroke="#444" stroke-width="1.3"/>
<path d="M600 69.5 L604 73.5 L608 69.5" fill="none" stroke="#444" stroke-width="1.3"/>
<g font-family="Liberation Sans" fill="#3b3b3b">
<text x="623.5" y="78.5" font-size="14">A</text>
<path d="M632.5 66.5 H636.5 M634.5 64.5 V68.5" stroke="#4a78b5" stroke-width="1" fill="none"/>
<text x="652" y="78.5" font-size="12">A</text>
<path d="M660 66.5 H664" stroke="#4a78b5" stroke-width="1" fill="none"/>
<text x="400.8" y="112" font-size="13.5" font-weight="700">F</text>
<text x="427.5" y="112" font-size="13.5" font-weight="700" font-style="italic">K</text>
<text x="455.7" y="111.5" font-size="13.5" font-weight="700">U</text>
<rect x="455.7" y="113" width="10" height="1.2" />
<text x="503" y="112" font-size="11.5">ab</text>
<rect x="501" y="108" width="16" height="1" />
<text x="531.8" y="112" font-size="13.5" font-weight="700" fill="#c4c4c4" transform="translate(1.2,1)">X</text>
<text x="531.8" y="112" font-size="13.5" font-weight="700">X</text>
<text x="559.5" y="109.5" font-size="13">A</text>
<rect x="556" y="111" width="18" height="3.6" fill="#e01b24"/>
<text x="601.5" y="112.5" font-size="12.5" fill="#555">Aa</text>
<path d="M604 98.5 H615 M604 98.5 l2 -1.6 M604 101 H615 M615 101 l-2 1.6" stroke="#9a9a9a" stroke-width="0.9" fill="none"/>
<text x="648.5" y="109" font-size="13">A</text>
<path d="M658.5 108 L662 104.5 L665 107.5 L661.5 111Z" fill="#eeb0b8" stroke="#e6909a" stroke-width="0.5"/>
<path d="M655.5 109.5 L658 112.5 L661 110.5" fill="none" stroke="#b5b5b5" stroke-width="1"/>
</g>
<path d="M660.5 149.5 H670 V140Z" fill="#8e8e8e"/>
<path d="M810.5 149.5 H820 V140Z" fill="#8e8e8e"/>
<!-- bullets -->
<g fill="#3a7cc0"><rect x="681.6" y="66" width="2.2" height="2"/><rect x="681.6" y="71" width="2.2" height="2"/><rect x="681.6" y="76.2" width="2.2" height="2"/></g>
<g stroke="#5a5a5a" stroke-width="1"><path d="M686 67 H694 M686 72 H694 M686 77.2 H694"/></g>
<!-- numbered -->
<g font-family="Liberation Sans" font-size="5.5" font-weight="700" fill="#2f78b8"><text x="724.6" y="69">1</text><text x="724.6" y="74.2">2</text><text x="724.6" y="79.4">3</text></g>
<g stroke="#5a5a5a" stroke-width="1"><path d="M730.2 67 H738 M730.2 72 H738 M730.2 77.2 H738"/></g>
<!-- indent (disabled) -->
<g stroke="#b9b9b9" stroke-width="1" fill="none"><path d="M776.5 66.4 H783 M776.5 69.6 H783 M768 72.8 H783 M768 75.8 H783 M768 78.6 H783 M768 68 H773.5"/></g>
<path d="M771.5 65.3 L774.7 68 L771.5 70.7Z" fill="#b9b9b9"/>
<g stroke="#b9b9b9" stroke-width="1" fill="none"><path d="M804.5 66.4 H811 M804.5 69.6 H811 M796 72.8 H811 M796 75.8 H811 M796 78.6 H811 M797.5 68 H803"/></g>
<path d="M799.2 65.3 L796 68 L799.2 70.7Z" fill="#b9b9b9"/>
<!-- align -->
<g stroke="#5a5a5a" stroke-width="1.1" fill="none">
<path d="M682 100.4 H694 M682 103 H690 M682 105.6 H694 M682 108.1 H690 M682 110.7 H694"/>
<path d="M707 100.4 H719 M709 103 H717 M707 105.6 H719 M709 108.1 H717 M707 110.7 H719"/>
<path d="M732 100.4 H744 M736 103 H744 M732 105.6 H744 M736 108.1 H744 M732 110.7 H744"/>
<path d="M757 100.4 H769 M757 103 H769 M757 105.6 H769 M757 108.1 H769 M757 110.7 H769"/>
<path d="M790.2 101.4 H798 M790.2 104.4 H796 M790.2 107.4 H798 M790.2 110.4 H796"/>
</g>
<path d="M785.6 100 V112 M783 102 L785.6 99.3 L788.2 102 M783 110 L785.6 112.7 L788.2 110" fill="none" stroke="#2f78b8" stroke-width="1.2"/>
</svg>

<!-- Objekte + Suchen + Auswahl -->
<svg style="left:0;top:0" width="1420" height="152">
<!-- Neues Objekt -->
<rect x="845" y="60" width="26.5" height="26.5" fill="#fff" stroke="#7c7c7c" stroke-width="1"/>
<g fill="#9aa5de"><rect x="869.7" y="58.2" width="3.6" height="3.6"/><rect x="843.2" y="84.7" width="3.6" height="3.6"/><rect x="869.7" y="84.7" width="3.6" height="3.6"/></g>
<path d="M840.2 59.8 H849.6 M844.9 55.1 V64.5" stroke="#f7c41c" stroke-width="2"/>
<!-- Fuellfarbe (disabled) -->
<g fill="none" stroke="#c4c4c4" stroke-width="1">
<path d="M894.8 58.7 H911.5 V67.5 H894.8Z"/>
<path d="M897.5 62.5 L901.5 58.5 L906 63 L902 67Z" fill="#dcdcdc"/>
<path d="M900 60 V57.2 a1.3 1.3 0 0 1 2.6 0 V59.5"/>
<path d="M906 63 c2 0 3 1 3.5 3"/>
</g>
<rect x="894.3" y="69.3" width="17.7" height="3.5" fill="#bdbdbd"/>
<!-- Linienfarbe -->
<g fill="none" stroke="#c4c4c4" stroke-width="1">
<path d="M894.8 83.5 H911.5 V92.7 H894.8Z"/>
<path d="M900 91.5 L908.5 82.5 L911 81 L910 84 L901.5 92.5Z" fill="#cfcfcf"/>
</g>
<rect x="894.3" y="94.2" width="17.7" height="3.5" fill="#bdbdbd"/>
<!-- Textdrehung -->
<rect x="895.7" y="106.6" width="15" height="14.6" fill="#f4f4f4" stroke="#bfbfbf" stroke-width="1"/>
<path d="M906.5 108 V120 M908.5 108 V120" stroke="#cfcfcf" stroke-width="0.8"/>
<!-- Vertikale -->
<rect x="1013.6" y="56.6" width="15" height="15" fill="#f4f4f4" stroke="#bfbfbf" stroke-width="1"/>
<path d="M1016 61.5 H1026 M1016 63.5 H1026" stroke="#d0d0d0" stroke-width="0.8" stroke-dasharray="2 1"/>
<!-- Spalten -->
<path d="M1015.8 81.4 H1022.8 L1026.5 85 V96 H1015.8Z" fill="#f4f4f4" stroke="#bfbfbf" stroke-width="1"/>
<path d="M1022.8 81.4 V85 H1026.5" fill="none" stroke="#bfbfbf" stroke-width="1"/>
<path d="M1017.5 88.5 H1020.5 M1021.8 88.5 H1024.8 M1017.5 90.5 H1020.5 M1021.8 90.5 H1024.8 M1017.5 92.5 H1020.5 M1021.8 92.5 H1024.8 M1017.5 94.3 H1020.5 M1021.8 94.3 H1024.8" stroke="#c9c9c9" stroke-width="0.9"/>
<!-- Suchen big -->
<path d="M1204.3 76.3 L1213.8 86.5" stroke="#8aa2e2" stroke-width="3.2" stroke-linecap="round"/>
<circle cx="1197" cy="67.8" r="9.3" fill="#fafafa" stroke="#9c9c9c" stroke-width="1.8"/>
<!-- a->b -->
<g font-family="Liberation Sans" font-size="11.5" fill="#3b3b3b"><text x="1233" y="68">a</text><text x="1243.8" y="68">b</text></g>
<path d="M1238.8 65.3 H1243 M1241.2 63.3 L1243.4 65.3 L1241.2 67.3" fill="none" stroke="#3f78b0" stroke-width="1"/>
<!-- weitersuchen -->
<path d="M1243.2 90.5 L1248.5 96" stroke="#8aa2e2" stroke-width="2" stroke-linecap="round"/>
<circle cx="1240.2" cy="88" r="4.4" fill="#f6f6f6" stroke="#9c9c9c" stroke-width="1.1"/>
<path d="M1240 82.3 a5.5 5.5 0 0 1 5.2 3" fill="none" stroke="#777" stroke-width="1"/>
<path d="M1243.4 86.3 L1246.2 86.3 L1246 83.4" fill="none" stroke="#777" stroke-width="1"/>
<!-- gehe zu -->
<rect x="1234" y="107.7" width="16.5" height="12.3" rx="1" fill="#fff" stroke="#8c8c8c" stroke-width="1"/>
<rect x="1236.5" y="110" width="11.5" height="1.4" fill="#c9c9c9"/>
<path d="M1236.5 113.5 H1241 M1236.5 115.5 H1240" stroke="#bdbdbd" stroke-width="0.9"/>
<rect x="1243.3" y="113" width="4.6" height="5" fill="#d9c6c2"/>
<rect x="1232.5" y="116" width="8" height="6" fill="#f0f0f0"/>
<path d="M1233 118.2 H1238 V116 L1242.2 119.3 L1238 122.6 V120.4 H1233Z" fill="#3f78b0"/>
<!-- Alles markieren -->
<rect x="1357.7" y="58.7" width="24" height="19" fill="#f9f9f9" stroke="#5d82ad" stroke-width="1" stroke-dasharray="1.6 1.5"/>
<path d="M1373.4 68.2 V86.8 L1378 82 H1386.3Z" fill="#fcfcfc" stroke="#8f8f8f" stroke-width="1" stroke-linejoin="miter"/>
</svg>

<!-- toolbar icons -->
<div class="tsep" style="left:34px"></div><div class="tsep" style="left:65px"></div><div class="tsep" style="left:153px"></div><div class="tsep" style="left:184px"></div>
<svg style="left:0;top:0" width="720" height="182">
<g fill="#616161"><rect x="12" y="160" width="12.3" height="1.8"/><rect x="12" y="164.2" width="12.3" height="1.8"/><rect x="12" y="168.4" width="12.3" height="1.8"/></g>
<!-- hand -->
<circle cx="48" cy="160.2" r="3.4" fill="#c9d6f3" stroke="#a9bbea" stroke-width="0.8"/>
<path d="M47.2 159.5 a1 1 0 0 1 2 0 V164 l0.3 -1 a0.9 0.9 0 0 1 1.8 0 l0.2 0 a0.9 0.9 0 0 1 1.7 0.3 a0.9 0.9 0 0 1 1.6 0.5 V168.5 c0 2.2 -1 3.3 -1.5 4.3 H47 c-1 -1.6 -2.6 -3.3 -3.6 -5.2 c-0.4 -0.9 0.7 -1.6 1.5 -0.8 L47.2 168Z" fill="#fff" stroke="#666" stroke-width="0.9"/>
<path d="M49.4 163.8 V167 M51.3 164 V167 M53.1 164.6 V167" stroke="#666" stroke-width="0.8" fill="none"/>
<!-- new doc -->
<path d="M74.5 157.5 H82 L85.5 161 V172.5 H74.5Z" fill="#fff" stroke="#8a8a8a" stroke-width="1"/>
<path d="M82 157.5 V161 H85.5" fill="none" stroke="#8a8a8a" stroke-width="1"/>
<!-- folder -->
<path d="M112.3 172.5 V161.3 a1 1 0 0 1 1 -1 H117.8 L119.5 162 H126 V164.5" fill="#fbdc9d" stroke="#d9a24e" stroke-width="1"/>
<path d="M112.5 172.5 L115.5 164.5 H128.3 L125.3 172.5Z" fill="#fbdc9d" stroke="#d9a24e" stroke-width="1" stroke-linejoin="round"/>
<!-- save -->
<path d="M160.6 157.6 H175.6 V172.5 H162.6 L160.6 170.5Z" fill="#8197dd" stroke="#4d5c8c" stroke-width="1"/>
<rect x="164" y="158.3" width="8.2" height="5.6" fill="#fdfbff" stroke="#4d5c8c" stroke-width="0.9"/>
<rect x="164.8" y="168.9" width="7" height="3.5" fill="#fdfbff" stroke="#4d5c8c" stroke-width="0.9"/>
<!-- undo / redo (disabled) -->
<path d="M195.5 163.8 C199 158.6 205.6 160.5 203.9 166.5 C203.3 168.5 202.5 170 201.5 171.6" fill="none" stroke="#c4c4c4" stroke-width="2.4"/>
<path d="M190.6 165 L197.2 160.3 L197.4 168.2Z" fill="#c4c4c4"/>
<path d="M240.5 163.8 C237 158.6 230.4 160.5 232.1 166.5 C232.7 168.5 233.5 170 234.5 171.6" fill="none" stroke="#c4c4c4" stroke-width="2.4"/>
<path d="M245.4 165 L238.8 160.3 L238.6 168.2Z" fill="#c4c4c4"/>
<path d="M269.6 158.4 L272 160.7 L269.6 163 M272.9 158.4 L275.3 160.7 L272.9 163" fill="none" stroke="#555" stroke-width="1.2"/>
<!-- doc tab icons -->
<g>
<path d="M299.5 160.5 H307 L311 164.5 V175.3 H299.5Z" fill="#fff" stroke="#b9b9b9" stroke-width="0.9"/>
<path d="M307 160.5 V164.5 H311" fill="none" stroke="#b9b9b9" stroke-width="0.9"/>
<circle cx="304.3" cy="165.3" r="1.6" fill="none" stroke="#e2b98e" stroke-width="0.8"/>
<path d="M303 169.2 H307 M303 171.2 H307 M303 173.2 H307" stroke="#d9b48c" stroke-width="0.8"/>
<path d="M300.8 169.2 H302 M300.8 171.2 H302 M300.8 173.2 H302" stroke="#a07a55" stroke-width="0.9"/>
<rect x="308" y="167" width="7.3" height="8.7" fill="#d98b3b"/>
<text x="311.6" y="174.3" font-size="7.5" font-weight="700" text-anchor="middle" fill="#fff" font-family="Liberation Sans">s</text>
</g>
<g transform="translate(200,-0.5)">
<path d="M299.5 160.5 H307 L311 164.5 V175.3 H299.5Z" fill="#fff" stroke="#b9b9b9" stroke-width="0.9"/>
<path d="M307 160.5 V164.5 H311" fill="none" stroke="#b9b9b9" stroke-width="0.9"/>
<circle cx="304.3" cy="165.3" r="1.6" fill="none" stroke="#e2b98e" stroke-width="0.8"/>
<path d="M303 169.2 H307 M303 171.2 H307 M303 173.2 H307" stroke="#d9b48c" stroke-width="0.8"/>
<path d="M300.8 169.2 H302 M300.8 171.2 H302 M300.8 173.2 H302" stroke="#a07a55" stroke-width="0.9"/>
<rect x="308" y="167" width="7.3" height="8.7" fill="#d98b3b"/>
<text x="311.6" y="174.3" font-size="7.5" font-weight="700" text-anchor="middle" fill="#fff" font-family="Liberation Sans">s</text>
</g>
<path d="M477.5 164.8 L485 172.3 M485 164.8 L477.5 172.3" stroke="#333" stroke-width="1.2" fill="none"/>
<path d="M677.5 164.3 L685 171.8 M685 164.3 L677.5 171.8" stroke="#333" stroke-width="1.2" fill="none"/>
</svg>

<!-- right panel toolbar -->
<div class="a" style="left:1683px;top:182px;width:24px;height:24px;background:#cce4f7;border:1px solid #7fb4e8"></div>
<svg style="left:0;top:0" width="1920" height="260">
<defs><linearGradient id="rb" x1="0" x2="1" y1="0" y2="0"><stop offset="0" stop-color="#e8352c"/><stop offset="0.25" stop-color="#f3a52a"/><stop offset="0.45" stop-color="#e9e23a"/><stop offset="0.62" stop-color="#3fb54a"/><stop offset="0.8" stop-color="#3b6fd6"/><stop offset="1" stop-color="#7a3bc2"/></linearGradient></defs>
<g fill="#fff" stroke="#8c8c8c" stroke-width="1">
<rect x="1686.5" y="187.5" width="17" height="13" rx="1.5"/>
<rect x="1711.5" y="187.5" width="17" height="13" rx="1.5"/>
<rect x="1736.5" y="187.5" width="17" height="13" rx="1.5"/>
<rect x="1761.5" y="187.5" width="17" height="13" rx="1.5"/>
<rect x="1786.5" y="187.5" width="17" height="13" rx="1"/>
</g>
<rect x="1689" y="190" width="12" height="1.5" fill="#c9c9c9"/><rect x="1689" y="193" width="5.4" height="5.4" fill="#c9c9c9"/><rect x="1695.6" y="193" width="5.4" height="5.4" fill="#c9c9c9"/>
<rect x="1714" y="190" width="12" height="1.5" fill="#d0d0d0"/><path d="M1714 193.5 H1721 M1714 195.5 H1719 M1714 197.5 H1719" stroke="#b5b5b5" stroke-width="0.9"/>
<path d="M1719.5 201 L1721.5 197.5 L1727 192 L1729 194 L1723.5 199.5Z" fill="#a9b6d9" stroke="#8d9bc4" stroke-width="0.5"/>
<rect x="1739" y="190" width="12" height="1.5" fill="#d0d0d0"/><path d="M1739 193.5 H1744 M1739 195.5 H1743 M1739 197.5 H1743" stroke="#b5b5b5" stroke-width="0.9"/>
<rect x="1743.5" y="194.3" width="10.3" height="8.3" fill="url(#rb)"/>
<rect x="1764" y="190" width="12" height="8" fill="#dbe4f6"/><rect x="1764" y="190" width="12" height="1.5" fill="#c3cfe9"/><rect x="1768" y="193" width="5" height="4" fill="#eef2fb"/>
<path d="M1794.5 187.5 V200.5" stroke="#8c8c8c" stroke-width="1"/>
<path d="M1787 194 H1792 M1790 191.8 L1792.4 194 L1790 196.2" fill="none" stroke="#3f78b0" stroke-width="1.1"/>
<path d="M1820.6 187.8 L1822.4 192.4 L1827.3 192.6 L1823.5 195.7 L1824.7 200.5 L1820.6 197.8 L1816.5 200.5 L1817.7 195.7 L1813.9 192.6 L1818.8 192.4Z" fill="#6d9fe6" stroke="#4f86d6" stroke-width="0.8"/>
<path d="M1811.5 189.3 H1816.7 M1814.1 186.7 V191.9" stroke="#f6c51b" stroke-width="1.6"/>
<path d="M1845.0 187.6 L1846.8 192.1 L1851.7 192.4 L1847.9 195.6 L1849.1 200.3 L1845.0 197.7 L1840.9 200.3 L1842.1 195.6 L1838.3 192.4 L1843.2 192.1Z" fill="#fbe38f" stroke="#e3b02c" stroke-width="1.2"/>
</svg>


<!-- TEXT -->
<div class="t" style="left:32.3px;top:2.5px;font-size:12px;line-height:15px;color:#ffffff;transform:scaleX(0.9799)">Unbenannt 1 - Presentations</div>
<div class="t" style="left:13.3px;top:28.3px;font-size:12px;line-height:15px;color:#ffffff;transform:scaleX(0.9653)">Datei</div>
<div class="t" style="left:60.3px;top:28.3px;font-size:12px;line-height:15px;color:#c2601a;transform:scaleX(0.8843)">Start</div>
<div class="t" style="left:104.0px;top:28.3px;font-size:12px;line-height:15px;color:#ffffff;transform:scaleX(1.0000)">Einfügen</div>
<div class="t" style="left:171.0px;top:28.3px;font-size:12px;line-height:15px;color:#ffffff;transform:scaleX(0.9733)">Design</div>
<div class="t" style="left:227.3px;top:28.3px;font-size:12px;line-height:15px;color:#ffffff;transform:scaleX(0.9879)">Übergang</div>
<div class="t" style="left:299.0px;top:28.3px;font-size:12px;line-height:15px;color:#ffffff;transform:scaleX(1.0572)">Animation</div>
<div class="t" style="left:375.0px;top:28.3px;font-size:12px;line-height:15px;color:#ffffff;transform:scaleX(0.9850)">Präsentation</div>
<div class="t" style="left:461.0px;top:28.3px;font-size:12px;line-height:15px;color:#ffffff;transform:scaleX(0.9996)">Ansicht</div>
<div class="t" style="left:11.0px;top:96.6px;font-size:12px;line-height:15px;color:#303030;transform:scaleX(1.0000)">Einfügen</div>
<div class="t" style="left:93.3px;top:57.3px;font-size:12px;line-height:15px;color:#a3a3a3;transform:scaleX(0.9824)">Ausschneiden</div>
<div class="t" style="left:93.3px;top:82.3px;font-size:12px;line-height:15px;color:#a3a3a3;transform:scaleX(0.9797)">Kopieren</div>
<div class="t" style="left:93.3px;top:107.3px;font-size:12px;line-height:15px;color:#a3a3a3;transform:scaleX(0.9969)">Format übertragen</div>
<div class="t" style="left:71.3px;top:136.3px;font-size:12px;line-height:15px;color:#444444;transform:scaleX(0.9709)">Bearbeiten</div>
<div class="t" style="left:210.3px;top:96.6px;font-size:12px;line-height:15px;color:#303030;transform:scaleX(1.0227)">Hinzufügen</div>
<div class="t" style="left:307.0px;top:57.3px;font-size:12px;line-height:15px;color:#303030;transform:scaleX(0.9729)">Layout</div>
<div class="t" style="left:307.0px;top:82.3px;font-size:12px;line-height:15px;color:#303030;transform:scaleX(0.9768)">Zurücksetzen</div>
<div class="t" style="left:307.0px;top:107.3px;font-size:12px;line-height:15px;color:#303030;transform:scaleX(1.0170)">Verwaltung</div>
<div class="t" style="left:281.3px;top:136.3px;font-size:12px;line-height:15px;color:#444444;transform:scaleX(0.9379)">Folie</div>
<div class="t" style="left:396.7px;top:65.3px;font-size:12px;line-height:15px;color:#111;transform:scaleX(0.9987)">Calibri</div>
<div class="t" style="left:564.0px;top:65.3px;font-size:12px;line-height:15px;color:#111;transform:scaleX(0.8776)">18</div>
<div class="t" style="left:502.3px;top:136.3px;font-size:12px;line-height:15px;color:#444444;transform:scaleX(0.9853)">Zeichen</div>
<div class="t" style="left:722.3px;top:136.3px;font-size:12px;line-height:15px;color:#444444;transform:scaleX(0.9459)">Absatz</div>
<div class="t" style="left:842.3px;top:96.6px;font-size:12px;line-height:15px;color:#303030;transform:scaleX(0.9427)">Neues</div>
<div class="t" style="left:834.3px;top:111.6px;font-size:12px;line-height:15px;color:#303030;transform:scaleX(0.9902)">Objekt</div>
<div class="t" style="left:917.3px;top:57.3px;font-size:12px;line-height:15px;color:#a3a3a3;transform:scaleX(0.9784)">Füllfarbe</div>
<div class="t" style="left:917.3px;top:82.3px;font-size:12px;line-height:15px;color:#a3a3a3;transform:scaleX(0.9832)">Linienfarbe</div>
<div class="t" style="left:917.3px;top:107.3px;font-size:12px;line-height:15px;color:#a3a3a3;transform:scaleX(1.0157)">Textdrehung</div>
<div class="t" style="left:1035.3px;top:57.3px;font-size:12px;line-height:15px;color:#a3a3a3;transform:scaleX(1.0031)">Vertikale Ausrichtung</div>
<div class="t" style="left:1035.3px;top:82.3px;font-size:12px;line-height:15px;color:#a3a3a3;transform:scaleX(0.9594)">Spalten</div>
<div class="t" style="left:976.0px;top:136.3px;font-size:12px;line-height:15px;color:#444444;transform:scaleX(0.9908)">Objekte</div>
<div class="t" style="left:1182.3px;top:96.6px;font-size:12px;line-height:15px;color:#303030;transform:scaleX(0.9594)">Suchen</div>
<div class="t" style="left:1256.0px;top:57.3px;font-size:12px;line-height:15px;color:#303030;transform:scaleX(0.9147)">Ersetzen</div>
<div class="t" style="left:1256.0px;top:82.3px;font-size:12px;line-height:15px;color:#303030;transform:scaleX(0.9893)">Weitersuchen</div>
<div class="t" style="left:1256.0px;top:107.3px;font-size:12px;line-height:15px;color:#303030;transform:scaleX(0.9331)">Gehe zu</div>
<div class="t" style="left:1233.3px;top:136.3px;font-size:12px;line-height:15px;color:#444444;transform:scaleX(0.9594)">Suchen</div>
<div class="t" style="left:1360.0px;top:96.6px;font-size:12px;line-height:15px;color:#303030;transform:scaleX(0.9612)">Alles</div>
<div class="t" style="left:1346.3px;top:111.6px;font-size:12px;line-height:15px;color:#303030;transform:scaleX(0.9948)">markieren</div>
<div class="t" style="left:1350.0px;top:136.3px;font-size:12px;line-height:15px;color:#444444;transform:scaleX(1.0069)">Auswahl</div>
<div class="t" style="left:321.0px;top:161.6px;font-size:12px;line-height:15px;color:#111;transform:scaleX(0.9677)">Presentations_nur Video.p...</div>
<div class="t" style="left:560.0px;top:161.1px;font-size:12px;line-height:15px;color:#111;transform:scaleX(0.9703)">Unbenannt 1</div>
<div class="t" style="left:11.7px;top:185.3px;font-size:12px;line-height:15px;color:#000;font-weight:700;transform:scaleX(0.9171)">Folien</div>
<div class="t" style="left:61.7px;top:185.3px;font-size:12px;line-height:15px;color:#111;transform:scaleX(0.9771)">Gliederung</div>
<div class="t" style="left:227.2px;top:211.3px;font-size:12px;line-height:15px;color:#111;transform:scaleX(0.9270)">Folie1</div>
<div class="t" style="left:1684.4px;top:224.6px;font-size:12px;line-height:15px;color:#000;font-weight:700;transform:scaleX(0.9424)">Folienlayout</div>
<div class="t" style="left:580.4px;top:556.7px;font-size:62px;line-height:78px;color:#000;-webkit-text-stroke:0.4px #000;transform:scaleX(1.0395)">Titel</div>
<div class="t" style="left:716.3px;top:556.7px;font-size:62px;line-height:78px;color:#000;-webkit-text-stroke:0.4px #000;transform:scaleX(1.0006)">durch</div>
<div class="t" style="left:888.6px;top:556.7px;font-size:62px;line-height:78px;color:#000;-webkit-text-stroke:0.4px #000;transform:scaleX(0.9421)">Klicken</div>
<div class="t" style="left:1095.2px;top:556.7px;font-size:62px;line-height:78px;color:#000;-webkit-text-stroke:0.4px #000;transform:scaleX(0.9929)">hinzufügen</div>
<div class="t" style="left:639.5px;top:724.6px;font-size:43.5px;line-height:54px;color:#000;-webkit-text-stroke:0.3px #000;transform:scaleX(1.1063)">Untertitel</div>
<div class="t" style="left:844.3px;top:724.6px;font-size:43.5px;line-height:54px;color:#000;-webkit-text-stroke:0.3px #000;transform:scaleX(1.0367)">durch</div>
<div class="t" style="left:969.9px;top:724.6px;font-size:43.5px;line-height:54px;color:#000;-webkit-text-stroke:0.3px #000;transform:scaleX(0.9746)">Klicken</div>
<div class="t" style="left:1119.3px;top:724.6px;font-size:43.5px;line-height:54px;color:#000;-webkit-text-stroke:0.3px #000;transform:scaleX(1.0315)">hinzufügen</div>
</body></html>
